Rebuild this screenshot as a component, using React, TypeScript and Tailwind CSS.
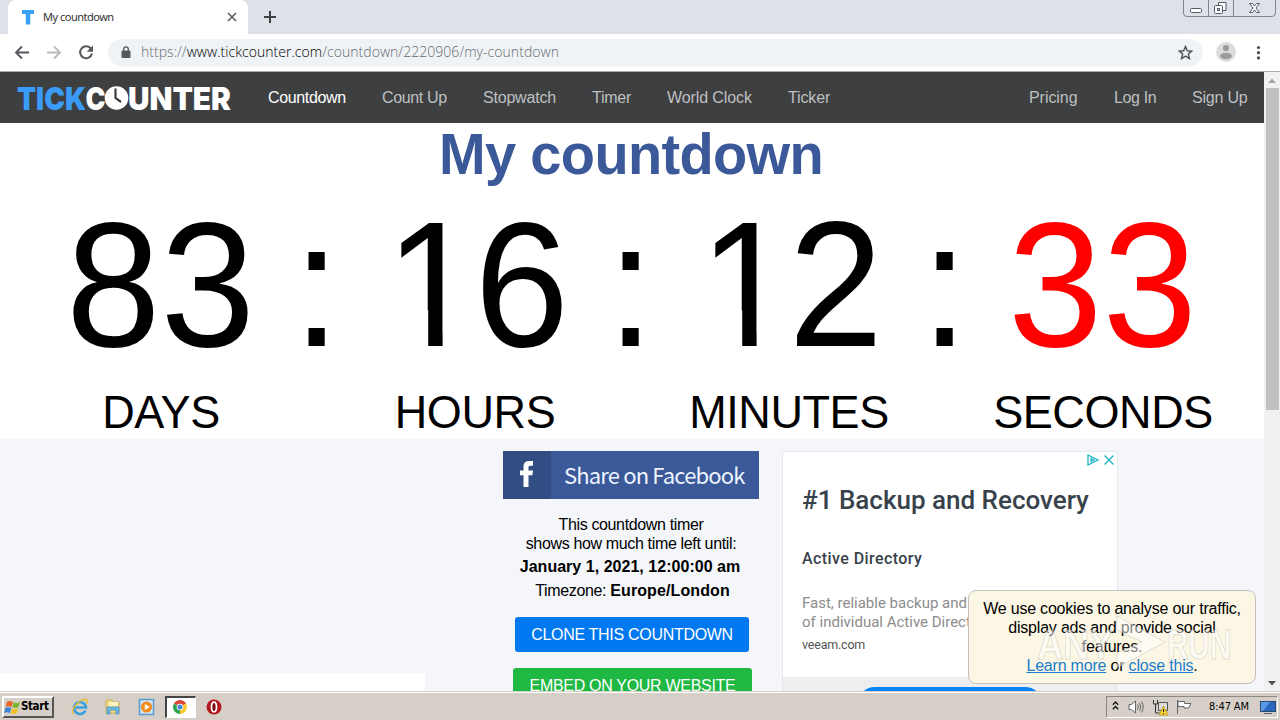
import React from 'react';

interface Unit {
  label: string;
  value: string;
  color: string;
}

const units: Unit[] = [
  { label: 'DAYS', value: '83', color: 'text-black' },
  { label: 'HOURS', value: '16', color: 'text-black' },
  { label: 'MINUTES', value: '12', color: 'text-black' },
  { label: 'SECONDS', value: '33', color: 'text-[#ff0000]' },
];

function TabStrip() {
  return (
    <div className="relative flex h-[34px] shrink-0 bg-[#dee1e8]">
      <div className="ml-2 flex h-[34px] w-[240px] items-center rounded-t-lg bg-white pl-3.5 pr-[11px]">
        <svg className="h-4 w-3.5" viewBox="0 0 14 16">
          <path d="M0 1h12v4H8.3v10.500H3.800V5H0z" fill="#3aa0f8" />
        </svg>
        <span className="ml-[7px] flex-1 font-['Noto_Sans'] text-[11px] tracking-[-0.5px] text-[#333]">My countdown</span>
        <svg className="h-[10px] w-[10px]" viewBox="0 0 10 10" stroke="#5f6368" strokeWidth="1.700">
          <path d="M1 1l8 8M9 1L1 9" />
        </svg>
      </div>
      <svg className="ml-4 mt-[11px] h-3 w-3" viewBox="0 0 12 12" stroke="#3c4043" strokeWidth="2">
        <path d="M6 0v12M0 6h12" />
      </svg>
      <WindowButtons />
    </div>
  );
}

function WindowButtons() {
  return (
    <svg className="absolute right-[3px] top-0 h-[18px] w-[94px]" viewBox="0 0 94 18" fill="none" stroke="#7f8591">
      <path d="M.5 0v13q0 3.500 3.500 3.500h85q3.500 0 3.500-3.500V0M25.500 0v16M50.500 0v16" />
      <rect x="7.500" y="8.500" width="11" height="4" rx="1" fill="#fff" stroke="#555b66" />
      <path d="M35.500 5.500v-3h7.500v8h-3" fill="#fff" stroke="#555b66" />
      <rect x="31.500" y="5.500" width="8" height="8" rx="1" fill="#fff" stroke="#555b66" />
      <rect x="34.500" y="8.500" width="2" height="2" stroke="#555b66" />
      <path d="M66.500 3.500h3l2 2.500 2-2.500h3l-3.500 4.500 3.500 4.500h-3l-2-2.500-2 2.500h-3l3.500-4.500z" fill="#fff" stroke="#555b66" />
    </svg>
  );
}

function Toolbar() {
  return (
    <div className="flex h-[38px] shrink-0 items-center border-b border-[#a9abad] bg-white pl-[14px]">
      <svg className="h-4 w-4" viewBox="0 0 16 16" fill="none" stroke="#55585c" strokeWidth="1.900">
        <path d="M15 7.500H2M8 1.500l-6 6 6 6" />
      </svg>
      <svg className="ml-4 h-4 w-4" viewBox="0 0 16 16" fill="none" stroke="#b9bbbe" strokeWidth="1.900">
        <path d="M1 7.500h13M8 1.500l6 6-6 6" />
      </svg>
      <svg className="ml-4 h-4 w-4" viewBox="0 0 16 16" fill="none" stroke="#55585c" strokeWidth="2">
        <path d="M13 3.700A6 6 0 1 0 14 8.500" />
        <path d="M15 .5v6.300H8.700z" fill="#55585c" stroke="none" />
      </svg>
      <div className="ml-[14px] flex h-[27px] w-[1095px] items-center rounded-full bg-[#f0f3f6] pl-[13px] pr-[10px]">
        <svg className="mb-[2px] h-3 w-[10px]" viewBox="0 0 10 12">
          <rect x=".5" y="4.500" width="9" height="7.500" rx="1" fill="#55585c" />
          <path d="M2.700 5V3.200a2.300 2.300 0 0 1 4.600 0V5" fill="none" stroke="#55585c" strokeWidth="1.300" />
        </svg>
        <span className="mb-[2px] ml-[10px] flex-1 whitespace-nowrap font-['Open_Sans'] text-[14px] font-light tracking-[0.04px] text-[#666b70]">
          https://<span className="text-black">www.tickcounter.com</span>/countdown/2220906/my-countdown
        </span>
        <svg className="mb-[1px] h-[15px] w-[15px]" viewBox="0 0 24 24" fill="none" stroke="#4f5357" strokeWidth="2.300">
          <path d="M12 2.500l2.900 6.700 7.100.6-5.400 4.700 1.700 7.200-6.300-3.900-6.300 3.900 1.700-7.200L2 9.800l7.100-.6z" />
        </svg>
      </div>
      <svg className="mb-[2px] ml-[13px] h-5 w-5" viewBox="0 0 20 20">
        <circle cx="10" cy="10" r="10" fill="#dcdcdc" />
        <circle cx="10" cy="6" r="3.100" fill="#9b9b9b" />
        <ellipse cx="10" cy="14" rx="6" ry="3.200" fill="#9b9b9b" />
      </svg>
      <svg className="ml-5 h-4 w-[5px]" viewBox="0 0 5 16" fill="#4a4d51">
        <circle cx="2.500" cy="2.500" r="1.600" />
        <circle cx="2.500" cy="7.700" r="1.600" />
        <circle cx="2.500" cy="12.900" r="1.600" />
      </svg>
    </div>
  );
}

function Logo() {
  return (
    <svg className="h-[30px] w-[216px] font-['Inter'] font-black" viewBox="0 0 216 30" fontSize="32">
      <text x="0" y="26.500" textLength="69" lengthAdjust="spacingAndGlyphs" fill="#3a9cf8">TICK</text>
      <text x="68.500" y="26.500" textLength="20" lengthAdjust="spacingAndGlyphs" fill="#fff">C</text>
      <circle cx="99.500" cy="15" r="11.800" fill="#fff" />
      <path d="M98.500 5.500V15l5.500 4" fill="none" stroke="#3e3f41" strokeWidth="2.200" />
      <text x="111" y="26.500" textLength="103" lengthAdjust="spacingAndGlyphs" fill="#fff">UNTER</text>
    </svg>
  );
}

function NavBar() {
  return (
    <nav className="flex h-[51px] shrink-0 items-center bg-[#3e3f41] pl-[17px] pr-4 text-[16px] text-[#bfc0c0]">
      <Logo />
      <div className="ml-[35px] flex gap-9 whitespace-nowrap">
        <span className="w-[78px] tracking-[-0.35px] text-white">Countdown</span>
        <span className="w-[65px] tracking-[-0.35px]">Count Up</span>
        <span className="w-[73px] tracking-[-0.2px]">Stopwatch</span>
        <span className="w-[39px] tracking-[-0.25px]">Timer</span>
        <span className="w-[85px] tracking-[-0.1px]">World Clock</span>
        <span className="w-[43px] tracking-[-0.15px]">Ticker</span>
      </div>
      <div className="ml-auto flex gap-9 whitespace-nowrap">
        <span className="w-[49px] tracking-[-0.05px]">Pricing</span>
        <span className="w-[42px] tracking-[-0.35px]">Log In</span>
        <span className="w-[56px] tracking-[-0.2px]">Sign Up</span>
      </div>
    </nav>
  );
}

// the "1" is shown as a bare stem, without its foot
function Digit({ char }: { char: string }) {
  if (char === '1') {
    return (
      <span className="inline-block w-[94.5px] translate-x-[5px] [clip-path:polygon(0_0,57.600px_0,57.600px_100%,43.200px_100%,43.200px_120px,0_120px)]">
        {char}
      </span>
    );
  }
  return <span className="inline-block w-[94.5px]">{char}</span>;
}

function Countdown() {
  return (
    <section className="h-[316px] shrink-0 overflow-hidden bg-white">
      <h1 className="h-[64px] origin-[50%_51px] scale-y-[1.04] pr-[2px] text-center text-[56px] font-bold leading-[63px] tracking-[-0.65px] text-[#3b5998]">My countdown</h1>
      <div className="mt-[5px] flex h-[190px] origin-[0_154px] scale-y-[1.05] pl-[66px] text-[170px] leading-[190px]">
        {units.map((unit, i) => (
          <React.Fragment key={unit.label}>
            <span className={`flex w-[190px] ${unit.color}`}>
              {unit.value.split('').map((char, n) => (
                <Digit key={n} char={char} />
              ))}
            </span>
            {i < units.length - 1 && <span className="w-[124px] pl-[37px]">:</span>}
          </React.Fragment>
        ))}
      </div>
      <div className="mt-[4px] flex origin-[0_42px] scale-y-[1.04] pl-[4px] text-center text-[45px] leading-[54px] tracking-[-0.4px]">
        {units.map((unit) => (
          <span key={unit.label} className="w-[314px] shrink-0">{unit.label}</span>
        ))}
      </div>
    </section>
  );
}

function SharePanel() {
  return (
    <div className="flex w-[256px] shrink-0 flex-col items-center text-[16px] leading-[19px] text-black">
      <div className="flex h-12 w-full shrink-0 bg-[#3b5998]">
        <div className="flex w-12 shrink-0 items-center justify-center bg-[#324c84]">
          <svg className="mb-[2px] h-7 w-[14px]" viewBox="0 0 14 28" fill="#fff">
            <path d="M3.500 27V15.200H0v-4.700h3.500V7c0-4 2-6 5.600-6H13v4.700h-2.500c-1.700 0-2 .7-2 2v2.800H13l-.6 4.700H8.500V27z" />
          </svg>
        </div>
        <span className="flex-1 whitespace-nowrap pl-[13px] font-['Noto_Sans_CJK_SC'] text-[22px] leading-[47px] tracking-[-0.85px] text-[#eef4ff]">Share on Facebook</span>
      </div>
      <p className="mt-4 text-center tracking-[-0.35px]">This countdown timer<br />shows how much time left until:</p>
      <p className="mt-1 whitespace-nowrap pr-[2px] font-bold tracking-[0.03px]">January 1, 2021, 12:00:00 am</p>
      <p className="mt-[5px] whitespace-nowrap pl-[3px] tracking-[-0.35px]">Timezone: <b className="tracking-[0.1px]">Europe/London</b></p>
      <button className="ml-[2px] mt-[17px] h-[35px] w-[234px] shrink-0 whitespace-nowrap rounded-[3px] bg-[#0078f0] tracking-[-0.3px] text-white">CLONE THIS COUNTDOWN</button>
      <button className="ml-[3px] mt-4 h-[35px] w-[239px] shrink-0 whitespace-nowrap rounded-[3px] bg-[#1fb843] tracking-[-0.3px] text-white">EMBED ON YOUR WEBSITE</button>
    </div>
  );
}

function AdPanel() {
  return (
    <div className="relative ml-[23px] h-[260px] w-[336px] shrink-0 border border-[#e6e8ee] bg-white font-['Roboto'] text-[#37424a]">
      <div className="absolute right-[2px] top-[2px] flex gap-1">
        <svg className="h-3 w-3" viewBox="0 0 12 12" fill="none" stroke="#22b3c4" strokeWidth="1.300">
          <path d="M1 1l10 5-10 5zM4 4.500v3L7 6z" />
        </svg>
        <svg className="h-3 w-3" viewBox="0 0 12 12" stroke="#22b3c4" strokeWidth="1.400">
          <path d="M1.500 1.500l9 9M10.500 1.500l-9 9" />
        </svg>
      </div>
      <div className="h-[225px] whitespace-nowrap pl-[19px] pt-8">
        <h2 className="text-[26px] font-medium leading-8">#1 Backup and Recovery</h2>
        <h3 className="mt-[33px] text-[16px] font-medium leading-5 tracking-[0.42px]">Active Directory</h3>
        <p className="mt-[25px] text-[15px] leading-[19px] text-[#8c8c8c]">Fast, reliable backup and recovery<br />of individual Active Directory objects</p>
        <p className="mt-[5px] text-[12.5px] leading-4 tracking-[-0.2px] text-[#555]">veeam.com</p>
      </div>
      <div className="h-[35px] bg-[#eeeef0] pt-[10px]">
        <div className="ml-[74px] h-9 w-[186px] rounded-full bg-[#0a84f5]" />
      </div>
    </div>
  );
}

function CookieNotice() {
  return (
    <div className="absolute left-[968px] top-[590px] h-[94px] w-[288px] rounded-lg border border-[#c4c2bd] bg-[#fcf7e4] pt-2 text-center text-[16px] leading-[19px] tracking-[-0.2px] text-black">
      <p>We use cookies to analyse our traffic,<br />display ads and provide social<br />features.</p>
      <p><span className="text-[#1a7ccc] underline">Learn more</span> or <span className="text-[#1a7ccc] underline">close this</span>.</p>
      <svg className="absolute left-[66px] top-[22px] h-[56px] w-[200px] font-['Liberation_Sans'] font-bold" viewBox="0 0 200 56" fontSize="42">
        <g fill="#fff" fillOpacity=".5" stroke="#999" strokeOpacity=".3">
          <text x="2" y="46" textLength="76" lengthAdjust="spacingAndGlyphs">ANY</text>
          <path d="M82 3l48 26-48 26V40l25-11-25-12z" />
          <text x="132" y="46" textLength="64" lengthAdjust="spacingAndGlyphs">RUN</text>
        </g>
      </svg>
    </div>
  );
}

function Scrollbar() {
  return (
    <div className="flex w-4 shrink-0 flex-col items-center bg-[#f1f1f1]">
      <svg className="h-4 w-4" viewBox="0 0 16 16"><path d="M4 11l4-4.500 4 4.500z" fill="#a3a3a3" /></svg>
      <div className="h-[322px] w-[13px] bg-[#c1c1c1]" />
      <svg className="mt-auto h-4 w-4" viewBox="0 0 16 16"><path d="M4 6l4 4.500L12 6z" fill="#505050" /></svg>
    </div>
  );
}

function Taskbar() {
  return (
    <div className="relative z-10 flex h-[29px] shrink-0 items-center border-t border-[#d4d0c8] bg-[#d6cfc8] pl-[2px] pr-[2px] shadow-[inset_0_1px_0_#fff]">
      <div className="mt-[2px] flex h-[22px] w-[52px] items-center border-2 border-b-[#555] border-l-white border-r-[#555] border-t-white">
        <svg className="h-[17px] w-[17px] shrink-0" viewBox="0 0 17 17">
          <path d="M3 3q3-2 6 0L7.500 8Q5 6.300 1.500 8z" fill="#e8642a" />
          <path d="M9.800 3.300q3 1.500 6.200-.3L14.500 8q-3 1.800-6.200.3z" fill="#7cb82f" />
          <path d="M1.300 9q3-1.600 6 0L5.800 14Q3 12.500 0 14z" fill="#3a86d8" />
          <path d="M8 9.300q3 1.500 6.200 0L12.800 14q-3 1.800-6.200.3z" fill="#f5bd2a" />
        </svg>
        <span className="font-['DejaVu_Sans_Condensed','DejaVu_Sans'] text-[11.500px] font-bold tracking-[-0.4px] text-black">Start</span>
      </div>
      <svg className="ml-[17px] mt-[1px] h-[18px] w-[18px]" viewBox="0 0 18 18" fill="none">
        <path d="M14.500 12.500A6 6 0 1 1 15 9.500H4" stroke="#3ea0dc" strokeWidth="2.700" />
        <path d="M2 16C-1 12 9 0 15 1.500c2 .5 1.500 2.500.8 4" stroke="#e9bf35" strokeWidth="1.500" />
      </svg>
      <svg className="ml-[15px] mt-[1px] h-[18px] w-[18px]" viewBox="0 0 18 18">
        <path d="M2 2h6l1 2h6v11H2z" fill="#efd98a" stroke="#c9a94c" strokeWidth=".8" />
        <path d="M5 4h9v4H5z" fill="#fff4bd" />
        <path d="M3 16V9h12v7h-3v-4H6v4z" fill="#6cb8e4" stroke="#4389b8" strokeWidth=".7" />
      </svg>
      <svg className="ml-4 mt-[1px] h-[18px] w-[18px]" viewBox="0 0 18 18">
        <rect x="1.500" y="1.500" width="14" height="15" fill="#cfe4f5" stroke="#5a9bcf" strokeWidth="1.500" />
        <circle cx="8.500" cy="9" r="5.500" fill="#f38a1c" />
        <path d="M6.800 6l5 3-5 3z" fill="#fff" />
      </svg>
      <div className="ml-[9px] mt-[2px] flex h-[22px] w-[31px] items-center justify-center border-b border-l-2 border-r border-t-2 border-b-white border-l-[#444] border-r-white border-t-[#444] bg-white pb-[2px] pr-[2px]">
        <svg className="h-[14px] w-[14px]" viewBox="0 0 14 14">
          <path d="M7 7L.94 3.500A7 7 0 0 1 13.060 3.500z" fill="#e04437" />
          <path d="M7 7l6.060-3.500A7 7 0 0 1 7 14z" fill="#fbcb2e" />
          <path d="M7 7v7A7 7 0 0 1 .94 3.500z" fill="#2fa350" />
          <circle cx="7" cy="7" r="3.300" fill="#fff" />
          <circle cx="7" cy="7" r="2.500" fill="#4a86e0" />
        </svg>
      </div>
      <svg className="ml-[10px] mt-[2px] h-4 w-4" viewBox="0 0 16 16">
        <circle cx="8" cy="8" r="7.500" fill="#b3161c" />
        <ellipse cx="8" cy="8" rx="2.500" ry="4.800" fill="#7c0a10" stroke="#fff" strokeWidth="1.800" />
      </svg>
      <div className="ml-auto mt-[2px] flex h-[22px] w-[172px] items-center border border-b-white border-l-[#8d8882] border-r-white border-t-[#8d8882] pl-[5px]">
        <svg className="h-3 w-[7px]" viewBox="0 0 7 12" fill="none" stroke="#111" strokeWidth="1.300">
          <path d="M.8 3.800L3.500 1l2.700 2.800M.8 8.300l2.700-2.800 2.700 2.800" />
        </svg>
        <svg className="ml-[9px] h-4 w-[17px]" viewBox="0 0 17 16" fill="none" stroke="#666" strokeWidth="1">
          <path d="M1 5.500h2.500L7.500 2v12l-4-3.500H1z" fill="#fff" />
          <path d="M9.500 5.500q1.500 2.500 0 5M11.500 4q2.500 4 0 8M13.500 2.500q3.500 5.500 0 11" />
        </svg>
        <svg className="ml-[7px] h-[17px] w-[17px]" viewBox="0 0 17 17" fill="none" stroke="#555">
          <path d="M6.500 3.500h9v8h-9zM8 14.500h6" fill="#ddd" />
          <path d="M1.500 1v4h4V1M3.500 5v9h4" stroke="#333" />
          <path d="M11.500 7l4.500 9H7z" fill="#fbd433" stroke="#b08c10" strokeWidth=".7" />
          <path d="M11.500 10v3M11.500 14v1" stroke="#222" />
        </svg>
        <svg className="ml-[7px] h-4 w-4" viewBox="0 0 16 16" fill="#fff" stroke="#666">
          <path d="M1.500 1v14M2 2.500h6.500v2H15L12.500 9H8V7.500H2z" />
        </svg>
        <span className="ml-[17px] whitespace-nowrap font-['DejaVu_Sans_Condensed','DejaVu_Sans'] text-[11px] tracking-[-0.1px] text-black">8:47 AM</span>
        <svg className="ml-auto mr-[1px] h-[15px] w-4 shrink-0" viewBox="0 0 16 15">
          <rect x=".5" y="1.500" width="15" height="10" fill="#2b68bd" stroke="#29486e" />
          <path d="M1 2h9L3 11H1z" fill="#5a9ae4" />
          <path d="M4 13.500h8" stroke="#55606c" />
        </svg>
      </div>
    </div>
  );
}

function App() {
  return (
    <div className="relative flex h-[720px] w-[1280px] flex-col overflow-hidden bg-white font-['Liberation_Sans',sans-serif]">
      <TabStrip />
      <Toolbar />
      <div className="flex h-[619px] shrink-0 overflow-hidden">
        <div className="flex w-[1264px] flex-col overflow-hidden bg-[#f4f6fa]">
          <NavBar />
          <Countdown />
          <main className="flex h-[252px] shrink-0 overflow-hidden pt-3">
            <div className="mr-[78px] mt-[222px] h-[30px] w-[425px] shrink-0 bg-white" />
            <SharePanel />
            <AdPanel />
          </main>
        </div>
        <Scrollbar />
      </div>
      <CookieNotice />
      <Taskbar />
    </div>
  );
}

export default App;
